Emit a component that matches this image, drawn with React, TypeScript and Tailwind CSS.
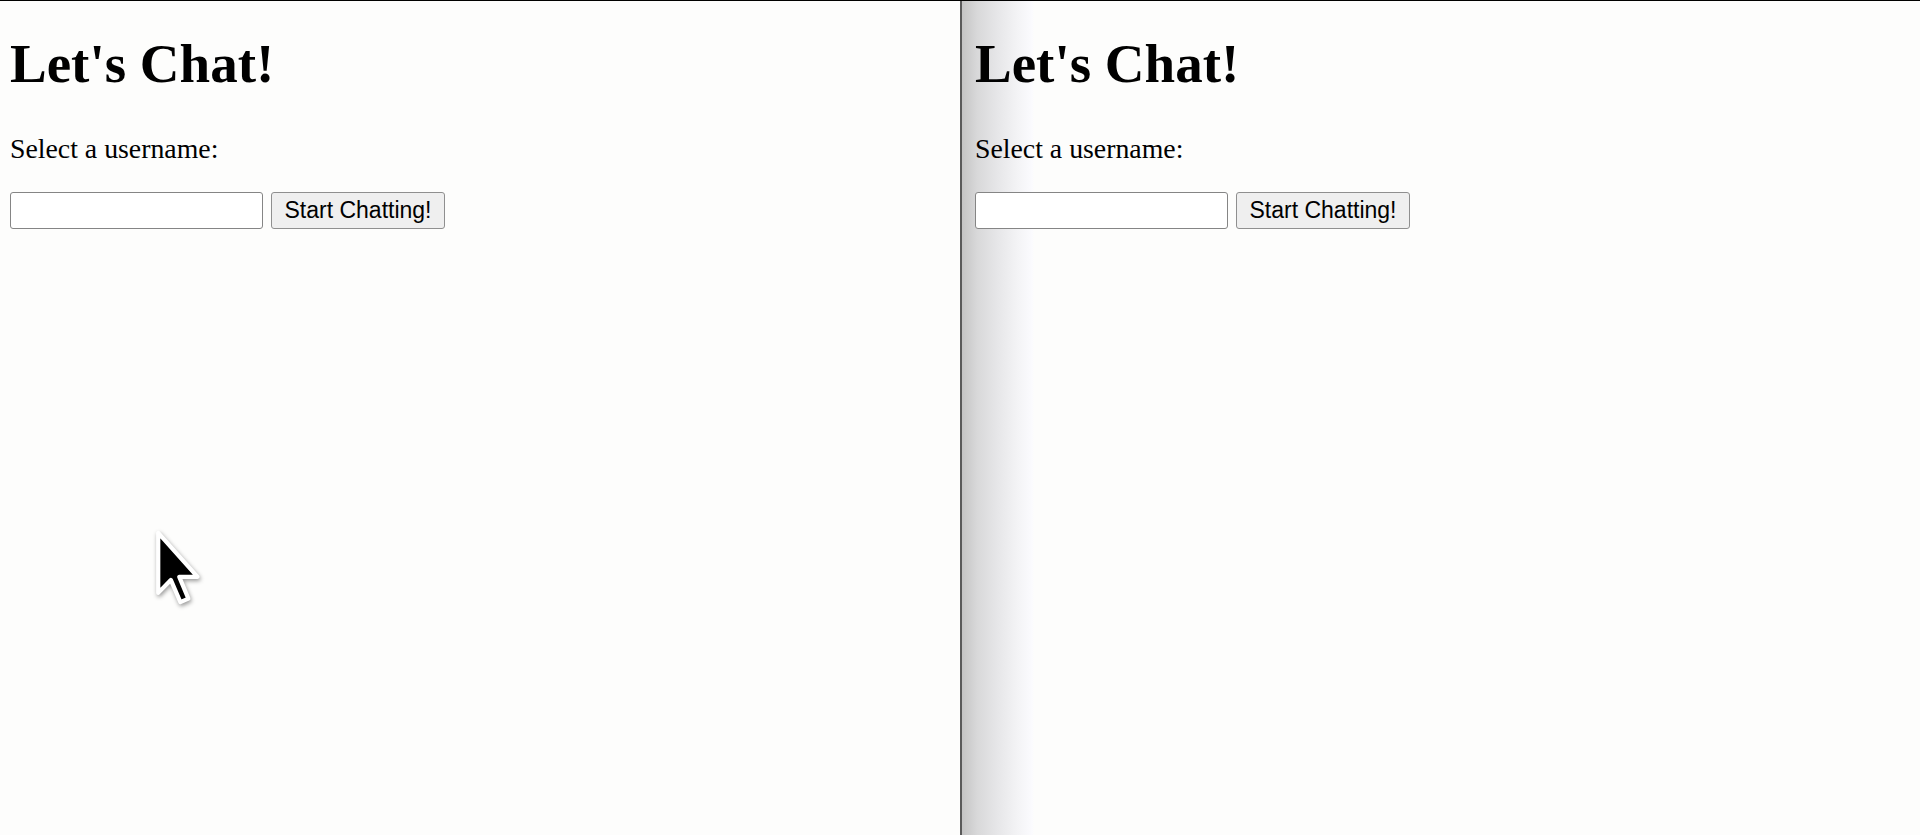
import React from "react";

function Panel({ pl }: { pl: string }) {
  return (
    <div className={`flex flex-col ${pl}`}>
      <h1 className="mt-[35px] font-['Liberation_Serif',serif] text-[55px] font-bold leading-[56px] text-black">
        Let's Chat!
      </h1>
      <p className="mt-[43px] font-['Liberation_Serif',serif] text-[27.8px] leading-[28px] text-black">
        Select a username:
      </p>
      <div className="mt-[29px] flex items-center gap-[8px]">
        <input
          type="text"
          className="h-[37px] w-[253px] rounded-[3px] border-[1.5px] border-[#858585] bg-white px-2 outline-none"
        />
        <button className="flex h-[37px] w-[174px] items-center justify-center rounded-[3px] border border-[#8f8f8f] bg-[#efefef] font-['Liberation_Sans',Arial,sans-serif] text-[23px] leading-none text-black">
          Start Chatting!
        </button>
      </div>
    </div>
  );
}

export default function App() {
  return (
    <div className="relative flex h-[835px] w-[1920px] flex-col overflow-hidden bg-[#fdfdfc]">
      <div className="h-px w-full bg-black" />
      <div className="flex flex-1">
        <div className="w-[960px] bg-[#fdfdfc]">
          <Panel pl="pl-[10px]" />
        </div>
        <div className="w-[2px] bg-[#5a5a5a]" />
        <div className="flex-1 bg-[#fdfdfc] bg-[linear-gradient(to_right,#c4c4c4_0px,#d8d8d9_15px,#e6e6e8_35px,#f3f3f5_55px,#fbfbfe_70px,#fdfdfc_72px)]">
          <Panel pl="pl-[13px]" />
        </div>
      </div>
      <svg
        className="absolute left-[153px] top-[528px]"
        width="54"
        height="84"
        viewBox="0 0 14 22"
        style={{ filter: "drop-shadow(1px 2px 2px rgba(0,0,0,0.4))" }}
      >
        <path
          d="M1.3 1.3 L1.3 17 L4.6 13.6 L7.1 19.4 L9.2 18.5 L6.8 12.8 L11.6 12.8 Z"
          fill="#000"
          stroke="#fff"
          strokeWidth="1.1"
          strokeLinejoin="round"
        />
      </svg>
    </div>
  );
}
